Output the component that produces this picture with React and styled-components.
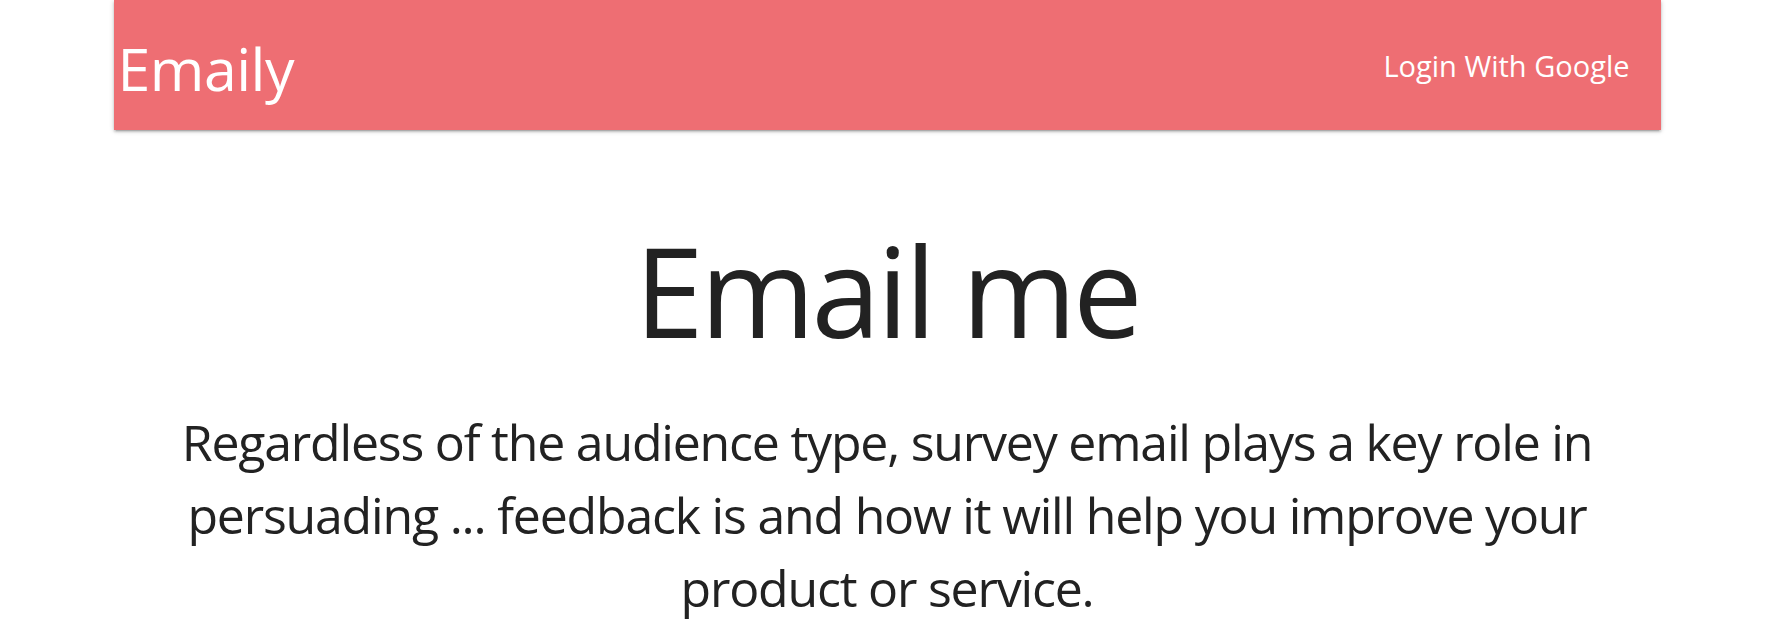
import React from "react";
import styled, { createGlobalStyle } from "styled-components";

const GlobalStyle = createGlobalStyle`
  body {
    margin: 0;
    background: #fff;
    font-family: "Segoe UI", "Open Sans", "Noto Sans", sans-serif;
    color: #222;
  }
`;

const Page = styled.div`
  width: 1547px;
  margin: 0 auto;
`;

const Nav = styled.nav`
  height: 130px;
  background-color: #ee6e73;
  box-shadow: 0 2px 2px 0 rgba(0, 0, 0, 0.14), 0 3px 1px -2px rgba(0, 0, 0, 0.12),
    0 1px 5px 0 rgba(0, 0, 0, 0.2);
  display: flex;
  align-items: center;
  justify-content: space-between;
  padding: 0 31px 0 4px;
  box-sizing: border-box;
  color: #fff;
`;

const Brand = styled.a`
  font-size: 59px;
  line-height: 1;
  margin-top: 6px;
  letter-spacing: -0.5px;
  color: inherit;
  text-decoration: none;
`;

const NavLink = styled.a`
  font-size: 29px;
  margin-top: 0;
  color: inherit;
  text-decoration: none;
`;

const Hero = styled.main`
  text-align: center;
  padding-top: 86px;
`;

const Title = styled.h1`
  font-size: 124px;
  font-weight: 400;
  line-height: 1.2;
  letter-spacing: -3.4px;
  margin: 0;
`;

const Lead = styled.p`
  font-size: 50px;
  line-height: 73px;
  letter-spacing: -1.2px;
  margin: 41px 0 0;
`;

export default function App() {
  return (
    <>
      <GlobalStyle />
      <Page>
        <Nav>
          <Brand href="#">Emaily</Brand>
          <NavLink href="#">Login With Google</NavLink>
        </Nav>
        <Hero>
          <Title>Email me</Title>
          <Lead>
            Regardless of the audience type, survey email plays a key role in
            <br />
            persuading ... feedback is and how it will help you improve your
            <br />
            product or service.
          </Lead>
        </Hero>
      </Page>
    </>
  );
}
